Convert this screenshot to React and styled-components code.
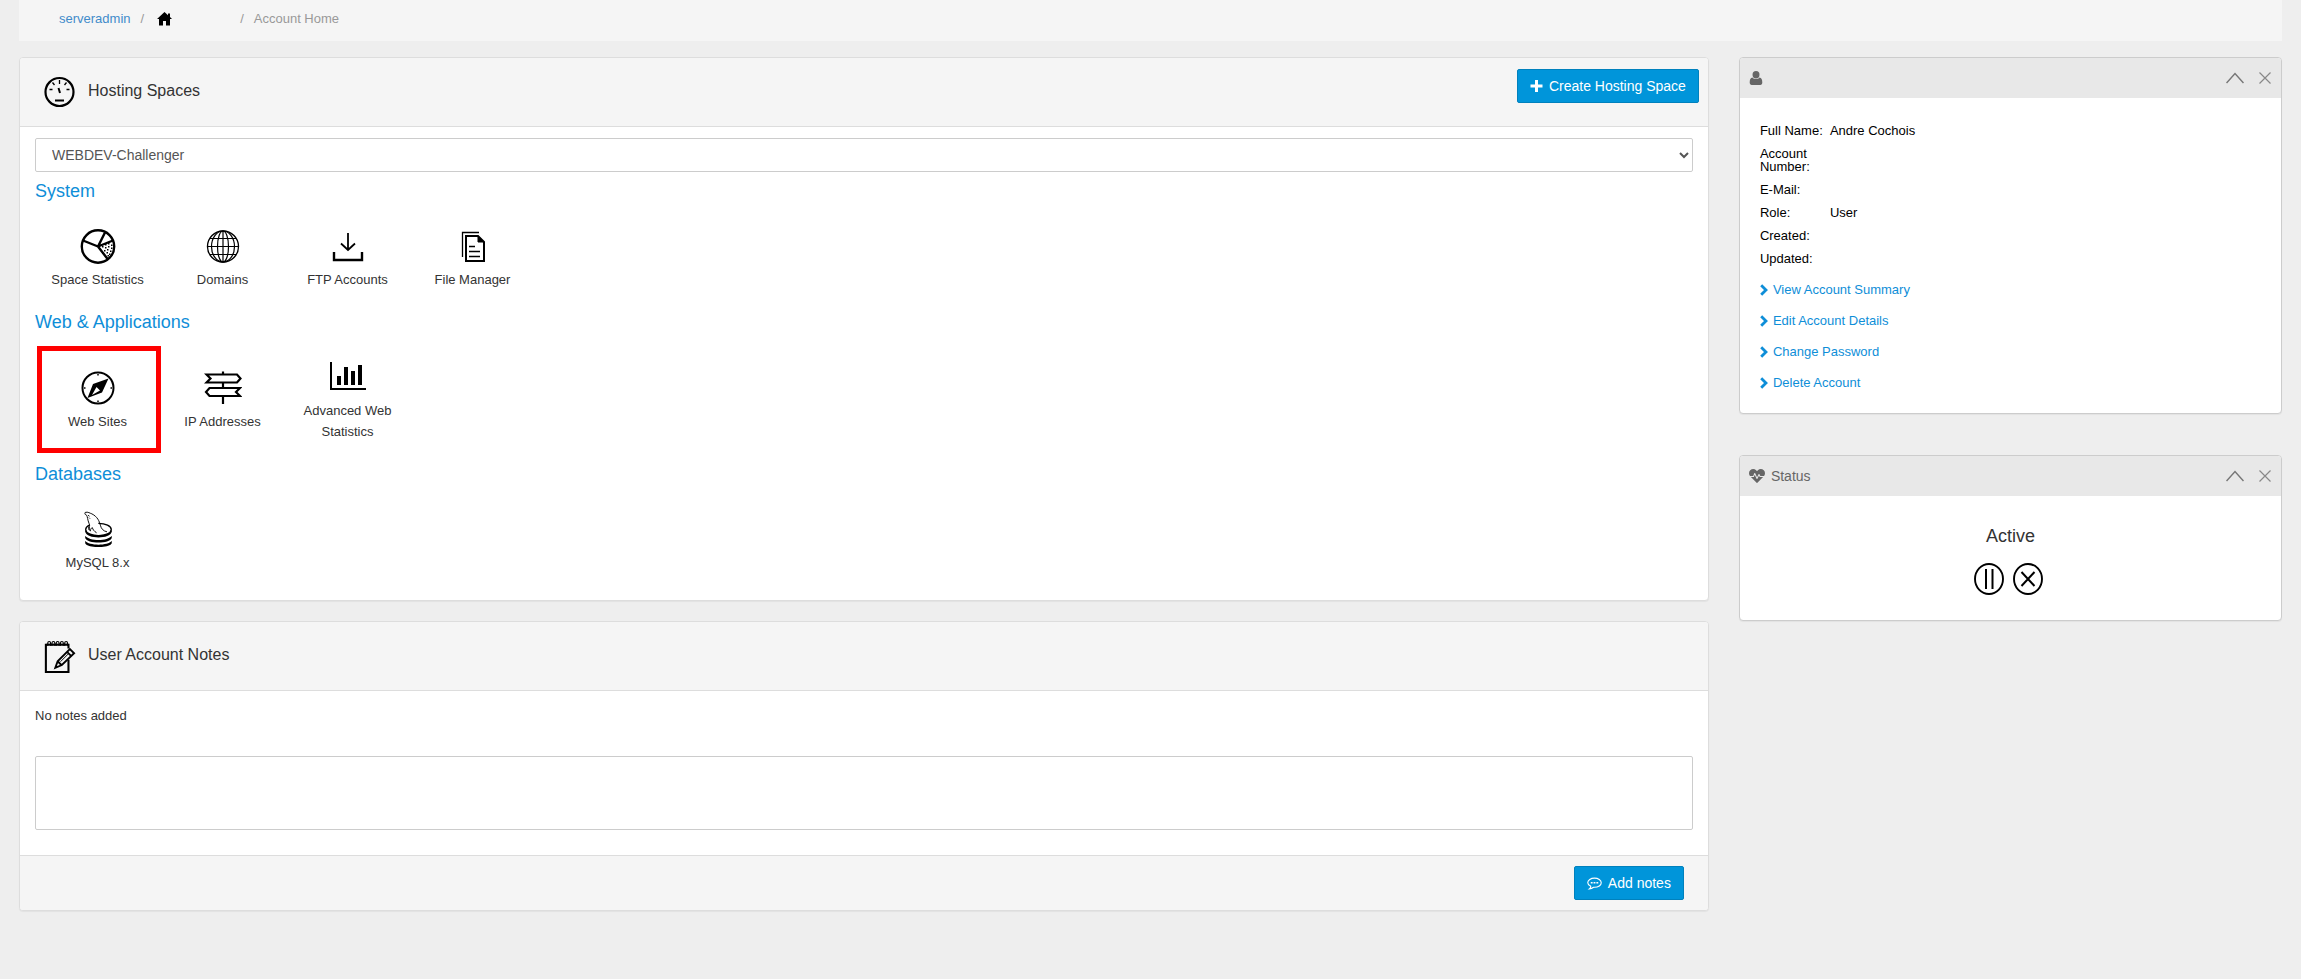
import * as React from "react";
import styled, { createGlobalStyle } from "styled-components";
import { FaHeartbeat } from "react-icons/fa";

const GlobalStyle = createGlobalStyle`
  * {
    box-sizing: border-box;
  }
  body {
    margin: 0;
    background: #eeeeee;
    color: #333;
    font-family: "Liberation Sans", Arial, sans-serif;
    font-size: 13px;
    line-height: 21px;
  }
  a {
    color: #0e8ed8;
    text-decoration: none;
  }
`;

const Page = styled.div`
  padding: 0 19px 40px;
`;

/**
 * Breadcrumb
 */
const Crumbs = styled.nav`
  display: flex;
  align-items: center;
  gap: 10px;
  height: 41px;
  padding: 0 40px 4px;
  background: #f5f5f5;
  color: #999;

  a {
    color: #428bca;
  }
  .home {
    display: flex;
    width: 73px;
    margin-left: 3px;
  }
`;

const Columns = styled.div`
  display: grid;
  grid-template-columns: minmax(0, 1fr) 24%;
  align-items: start;
  gap: 30px;
  margin-top: 16px;
`;

const MainColumn = styled.main`
  display: grid;
  gap: 20px;
`;

const SideColumn = styled.aside`
  display: grid;
  gap: 41px;
`;

const Panel = styled.section`
  background: white;
  border: 1px solid ${(props) => props.$edge || "#ddd"};
  border-radius: 4px;
  box-shadow: 0 1px 1px rgba(0, 0, 0, 0.05);
  overflow: hidden;
`;

const PanelHeader = styled.header`
  display: flex;
  align-items: flex-start;
  height: 69px;
  padding: 11px 9px 0 24px;
  background: #f5f5f5;
  border-bottom: 1px solid #ddd;

  > svg {
    margin-top: 7px;
  }
`;

const PanelTitle = styled.h3`
  flex: 1;
  margin: 12px 0 0 12px;
  font-size: 16px;
  font-weight: normal;
  line-height: 20px;
`;

const PanelBody = styled.div`
  padding: ${(props) => props.$pad || "11px 15px 27px"};
`;

const PanelFooter = styled.footer`
  display: flex;
  justify-content: flex-end;
  padding: 10px 24px;
  background: #f5f5f5;
  border-top: 1px solid #ddd;
`;

const Button = styled.button`
  display: flex;
  align-items: center;
  gap: 6px;
  height: 34px;
  padding: 0 12px;
  color: white;
  background: #0095da;
  border: 1px solid #0081bd;
  border-radius: 2px;
  font-family: inherit;
  font-size: 14px;
  cursor: pointer;
`;

const SpaceSelect = styled.select`
  display: block;
  width: 100%;
  height: 34px;
  margin-bottom: 9px;
  padding: 0 0 0 12px;
  color: #555;
  background: white;
  border: 1px solid #ccc;
  border-radius: 2px;
  font-family: inherit;
  font-size: 14px;
`;

const GroupTitle = styled.h4`
  margin: 0 0 27px;
  color: #0e8ed8;
  font-size: 18px;
  font-weight: normal;
  line-height: 20px;
`;

const TileRow = styled.div`
  display: flex;
  align-items: center;
  margin-bottom: ${(props) => (props.$last ? 0 : 22)}px;
`;

const Tile = styled.a`
  position: relative;
  display: flex;
  flex-direction: column;
  align-items: center;
  gap: 5px;
  width: 125px;
  padding: 0 15px;
  color: #333;
  text-align: center;

  svg {
    display: block;
  }
`;

/* red frame lying over the highlighted tile */
const Highlight = styled.span`
  position: absolute;
  inset: -24px -1px -21px 2px;
  border: 5px solid #ff0000;
  pointer-events: none;
`;

const NoteText = styled.p`
  margin: 0 0 30px;
`;

const NoteInput = styled.textarea`
  display: block;
  width: 100%;
  height: 74px;
  border: 1px solid #ccc;
  border-radius: 2px;
  resize: none;
`;

const SideHeader = styled.header`
  display: flex;
  align-items: center;
  gap: 6px;
  height: 40px;
  padding: 0 10px 0 9px;
  background: #e8e8e8;
  color: #666;
  font-size: 14px;

  h3 {
    flex: 1;
    margin: 0;
    font-size: 14px;
    font-weight: normal;
  }
`;

const HeaderTools = styled.div`
  display: flex;
  align-items: center;
  gap: 15px;
  margin-left: auto;
`;

const IconButton = styled.button`
  display: flex;
  padding: 0;
  color: inherit;
  background: none;
  border: none;
  cursor: pointer;
`;

const Details = styled.table`
  border-collapse: collapse;
  color: black;
  line-height: 13px;

  th {
    width: 70px;
    padding: 5px 0;
    font-weight: normal;
    text-align: left;
  }
  td {
    padding: 5px 0;
  }
`;

const AccountLinks = styled.ul`
  display: grid;
  gap: 10px;
  margin: 9px 0 0;
  padding: 0;
  list-style: none;

  a {
    display: flex;
    align-items: center;
    gap: 5px;
  }
`;

const StatusBody = styled.div`
  display: flex;
  flex-direction: column;
  align-items: center;
  gap: 16px;
  padding: 30px 0 25px;
  font-size: 18px;
`;

const StatusActions = styled.div`
  display: flex;
  gap: 9px;
  margin-right: 4px;
`;

/**
 * Icons
 */
const HomeIcon = () => (
  <svg width="15" height="14" viewBox="0 0 15 14" fill="#000">
    <path d="M7.500 0 11 3.200V1.500h2v3.600L15 7h-2v6.500H9V9H6v4.500H2V7H0z" />
  </svg>
);

const GaugeIcon = () => (
  <svg width="32" height="32" viewBox="0 0 32 32" fill="none" stroke="#000">
    <circle cx="15.500" cy="16" r="14" strokeWidth="2.200" />
    <path
      strokeWidth="1.300"
      d="M15.500 4v4M5.500 13.500h3M22.500 13.500h3M8.500 6.500l2 2.500M22.500 6.500l-2 2.500"
    />
    <path strokeWidth="2" d="M14.500 12l1.500 5M11 24.500h9" />
  </svg>
);

const NotesIcon = () => (
  <svg width="32" height="34" viewBox="0 0 34 36" fill="none" stroke="#000">
    <path strokeWidth="2.200" d="M26 21v13H2V5h24v4" />
    <path strokeWidth="1" d="M2 4.500h24" />
    <path
      strokeWidth="1.200"
      d="M4 6V3q0-1.500 1.500-1.500T7 3v3M8.500 6V3q0-1.500 1.500-1.500T11.500 3v3M13 6V3q0-1.500 1.500-1.500T16 3v3M17.500 6V3q0-1.500 1.500-1.500T20.500 3v3M22 6V3q0-1.500 1.500-1.500T25 3v3"
    />
    <path
      strokeWidth="2"
      fill="#f5f5f5"
      d="M12 29.500l2.500-7L27.500 9.500l4.500 4.500-13 12.500zM24.500 12.500l4.500 4.500M14.500 22.500l4 4"
    />
    <path strokeWidth="1" d="M17.500 23l8.500-8.500" />
  </svg>
);

const PieIcon = () => (
  <svg width="36" height="36" viewBox="0 0 36 36" fill="none" stroke="#000">
    <circle cx="18" cy="18.500" r="16.200" strokeWidth="2.400" />
    <path
      strokeWidth="2.400"
      d="M18 18.500L3 12.500M18 18.500l7-14M18 18.500l15-6M18 18.500l10 13"
    />
    <path
      stroke="none"
      fill="#000"
      d="M22 18h1.500v1.500H22zM25 16h1.500v1.500H25zM28 15h1.500v1.500H28zM31 16.500h1.500v1.500H31zM25 19h1.500v1.500H25zM28 18h1.500v1.500H28zM31 19.500h1.500v1.500H31zM24 22h1.500v1.500H24zM27 21h1.500v1.500H27zM30 22.500h1.500v1.500H30zM26.500 24h1.500v1.500h-1.500zM29 25.500h1.500v1.500H29zM27.500 27h1.500v1.500h-1.500z"
    />
  </svg>
);

const GlobeIcon = () => (
  <svg width="36" height="36" viewBox="0 0 36 36" fill="none" stroke="#000">
    <circle cx="18" cy="18.500" r="15.500" strokeWidth="1.400" />
    <ellipse cx="18" cy="18.500" rx="5.500" ry="15.500" strokeWidth="1.200" />
    <ellipse cx="18" cy="18.500" rx="11.500" ry="15.500" strokeWidth="1.200" />
    <path
      strokeWidth="1.200"
      d="M18 3v31M2.500 18.500h31M5 10.500h26M5 26.500h26"
    />
  </svg>
);

const DownloadIcon = () => (
  <svg width="36" height="36" viewBox="0 0 36 36" fill="none" stroke="#000">
    <path strokeWidth="1.800" d="M18 5v17M11 15.500l7 6.500 7-6.500" />
    <path strokeWidth="2.400" d="M4 24v8h28v-8" />
  </svg>
);

const FilesIcon = () => (
  <svg width="36" height="36" viewBox="0 0 36 36" fill="none" stroke="#000">
    <path strokeWidth="1.300" d="M7.500 29V4.500H24" />
    <path strokeWidth="2" d="M11 8h12l6 6v19H11z" />
    <path fill="#000" d="M23 8l6 6h-6z" />
    <path strokeWidth="1.300" d="M14 18.500h6M14 23.500h11M14 28.500h11" />
  </svg>
);

const CompassIcon = () => (
  <svg width="36" height="36" viewBox="0 0 36 36" fill="none" stroke="#000">
    <circle cx="18" cy="18" r="15.500" strokeWidth="2" />
    <path strokeWidth="1.500" d="M18 4v1.500M18 30.500V32M4 18h1.500M30.500 18H32" />
    <path
      fill="#000"
      fillRule="evenodd"
      stroke="none"
      d="M28.500 8.500L22 22.500 7.500 28 13 14zM16.500 17L12 25l8-4.500z"
    />
  </svg>
);

const SignpostIcon = () => (
  <svg width="38" height="36" viewBox="0 0 38 36" fill="none" stroke="#000">
    <path strokeWidth="2.200" d="M19 1.500V4M19 13v4M19 27v7" />
    <path strokeWidth="2.200" d="M2.500 4.500H33l3.500 4-3.500 4H2.500l4-4z" />
    <path strokeWidth="2.200" d="M36 18H5.500L2 22l3.500 4H36l-4-4z" />
  </svg>
);

const ChartIcon = () => (
  <svg width="36" height="36" viewBox="0 0 36 36" fill="#000">
    <path d="M0 3h2v26h34v2H0z" />
    <path d="M7 17h4v9H7zM14 8h4v18h-4zM21 12h4v14h-4zM28 6h4v20h-4z" />
  </svg>
);

const MySqlIcon = () => (
  <svg width="32" height="36" viewBox="0 0 32 38" fill="none" stroke="#000">
    <ellipse cx="16.500" cy="19.500" rx="13.500" ry="6.500" strokeWidth="1.400" />
    <path
      fill="#fff"
      stroke="none"
      d="M2 1.500c5-1.500 10 2 12.500 7 2.500 5 2 8.500 6.500 13l-9 3-5-3c0-5 1-5-.500-8.500C5 9 4.500 6 2 3z"
    />
    <path
      strokeWidth="1"
      d="M6.500 20c0-3 1.500-4.500 0-7C5 9.500 5 6 4 4.500 3 3.500 1.500 4 2.500 1.500c3-1 5 1 7 1.500 6 3 8 8 9 12 1 4 3 6 7 7M6 16.500c.500 2 .500 4 2 4.500 0-2 1-3 2-3.500.500 2 2 4 4.500 5.500M5.500 4.500l1.500 1M6.500 7l1 1"
    />
    <path
      stroke="none"
      fill="#000"
      d="M2.500 19.500C3 27.500 30 27.500 30.500 19.500v2.500C29 30 4 30 2.500 22zM2.500 26c4 6 24 6 28 0v2.500C28.500 35 4.500 35 2.500 28.500zM2.500 31.500c4 5.500 24 5.500 28 0V34c-2 5.500-26 5.500-28 0z"
    />
  </svg>
);

const PlusIcon = () => (
  <svg width="13" height="12" viewBox="0 0 13 12" fill="#fff">
    <path d="M5 0h3v4.500h4.500v3H8V12H5V7.500H.500v-3H5z" />
  </svg>
);

const CommentIcon = () => (
  <svg width="15" height="13" viewBox="0 0 16 13" fill="none" stroke="#fff">
    <path
      strokeWidth="1.200"
      d="M4 9.500C2 8.500.800 7.200.800 5.700.800 3 4 .800 8 .800s7.200 2.200 7.200 4.900S12 10.500 8 10.500H7C5.500 11.800 4 12.200 2.500 12.200 3.500 11.500 4 10.500 4 9.500z"
    />
    <path strokeWidth="1.800" d="M4 5.700h2M7 5.700h2M10 5.700h2" />
  </svg>
);

const UserIcon = () => (
  <svg width="14" height="14" viewBox="0 0 14 14" fill="#666">
    <ellipse cx="7" cy="3.700" rx="3.500" ry="3.700" />
    <path d="M3.500 6.500C5 8.500 9 8.500 10.500 6.500 12.500 7 13.300 8.500 13.300 11.500c0 1.500-.800 2.500-2 2.500H2.700c-1.200 0-2-1-2-2.500 0-3 .800-4.500 2.800-5z" />
  </svg>
);

const CollapseIcon = () => (
  <svg width="18" height="12" viewBox="0 0 18 12" fill="none" stroke="#777">
    <path strokeWidth="1.500" d="M.500 11L9 1.500l8.500 9.500" />
  </svg>
);

const CloseIcon = () => (
  <svg width="12" height="12" viewBox="0 0 12 12" fill="none" stroke="#888">
    <path strokeWidth="1.200" d="M.500.500l11 11M11.500.500l-11 11" />
  </svg>
);

const ChevronIcon = () => (
  <svg width="8" height="12" viewBox="0 0 8 12" fill="none" stroke="#0e8ed8">
    <path strokeWidth="2.800" d="M1.200 1.200L6 6l-4.800 4.800" />
  </svg>
);

const PauseIcon = () => (
  <svg width="30" height="32" viewBox="0 0 30 32" fill="none" stroke="#000">
    <ellipse cx="15" cy="16" rx="14" ry="15" strokeWidth="1.900" />
    <path strokeWidth="2" d="M12 6v20M18.500 6v20" />
  </svg>
);

const CancelIcon = () => (
  <svg width="30" height="32" viewBox="0 0 30 32" fill="none" stroke="#000">
    <ellipse cx="15" cy="16" rx="14" ry="15" strokeWidth="1.900" />
    <path strokeWidth="2" d="M8.500 9l13 14M21.500 9l-13 14" />
  </svg>
);

const groups = [
  {
    title: "System",
    items: [
      { label: "Space Statistics", Icon: PieIcon },
      { label: "Domains", Icon: GlobeIcon },
      { label: "FTP Accounts", Icon: DownloadIcon },
      { label: "File Manager", Icon: FilesIcon },
    ],
  },
  {
    title: "Web & Applications",
    items: [
      { label: "Web Sites", Icon: CompassIcon, highlight: true },
      { label: "IP Addresses", Icon: SignpostIcon },
      { label: "Advanced Web Statistics", Icon: ChartIcon },
    ],
  },
  {
    title: "Databases",
    items: [{ label: "MySQL 8.x", Icon: MySqlIcon }],
  },
];

const details = [
  ["Full Name:", "Andre Cochois"],
  ["Account Number:", ""],
  ["E-Mail:", ""],
  ["Role:", "User"],
  ["Created:", ""],
  ["Updated:", ""],
];

const accountLinks = [
  "View Account Summary",
  "Edit Account Details",
  "Change Password",
  "Delete Account",
];

const PanelTools = () => (
  <HeaderTools>
    <IconButton aria-label="Collapse">
      <CollapseIcon />
    </IconButton>
    <IconButton aria-label="Close">
      <CloseIcon />
    </IconButton>
  </HeaderTools>
);

const HostingSpaces = () => (
  <Panel>
    <PanelHeader>
      <GaugeIcon />
      <PanelTitle>Hosting Spaces</PanelTitle>
      <Button>
        <PlusIcon />
        Create Hosting Space
      </Button>
    </PanelHeader>
    <PanelBody>
      <SpaceSelect aria-label="Hosting space">
        <option>WEBDEV-Challenger</option>
      </SpaceSelect>
      {groups.map(({ title, items }, index) => (
        <React.Fragment key={title}>
          <GroupTitle>{title}</GroupTitle>
          <TileRow $last={index === groups.length - 1}>
            {items.map(({ label, Icon, highlight }) => (
              <Tile href="#" key={label}>
                <Icon />
                {label}
                {highlight && <Highlight />}
              </Tile>
            ))}
          </TileRow>
        </React.Fragment>
      ))}
    </PanelBody>
  </Panel>
);

const AccountNotes = () => (
  <Panel>
    <PanelHeader>
      <NotesIcon />
      <PanelTitle>User Account Notes</PanelTitle>
    </PanelHeader>
    <PanelBody $pad="14px 15px 25px">
      <NoteText>No notes added</NoteText>
      <NoteInput aria-label="Note" />
    </PanelBody>
    <PanelFooter>
      <Button>
        <CommentIcon />
        Add notes
      </Button>
    </PanelFooter>
  </Panel>
);

const AccountPanel = () => (
  <Panel $edge="#ccc">
    <SideHeader>
      <UserIcon />
      <PanelTools />
    </SideHeader>
    <PanelBody $pad="21px 20px 20px">
      <Details>
        <tbody>
          {details.map(([name, value]) => (
            <tr key={name}>
              <th scope="row">{name}</th>
              <td>{value}</td>
            </tr>
          ))}
        </tbody>
      </Details>
      <AccountLinks>
        {accountLinks.map((text) => (
          <li key={text}>
            <a href="#">
              <ChevronIcon />
              {text}
            </a>
          </li>
        ))}
      </AccountLinks>
    </PanelBody>
  </Panel>
);

const StatusPanel = () => (
  <Panel $edge="#ccc">
    <SideHeader>
      <FaHeartbeat size={16} />
      <h3>Status</h3>
      <PanelTools />
    </SideHeader>
    <StatusBody>
      Active
      <StatusActions>
        <IconButton aria-label="Suspend">
          <PauseIcon />
        </IconButton>
        <IconButton aria-label="Cancel">
          <CancelIcon />
        </IconButton>
      </StatusActions>
    </StatusBody>
  </Panel>
);

const App = () => {
  return (
    <>
      <GlobalStyle />
      <Page>
        <Crumbs aria-label="Breadcrumb">
          <a href="#">serveradmin</a>
          <span>/</span>
          <a href="#" className="home" aria-label="Home">
            <HomeIcon />
          </a>
          <span>/</span>
          <span>Account Home</span>
        </Crumbs>
        <Columns>
          <MainColumn>
            <HostingSpaces />
            <AccountNotes />
          </MainColumn>
          <SideColumn>
            <AccountPanel />
            <StatusPanel />
          </SideColumn>
        </Columns>
      </Page>
    </>
  );
};

export default App;
